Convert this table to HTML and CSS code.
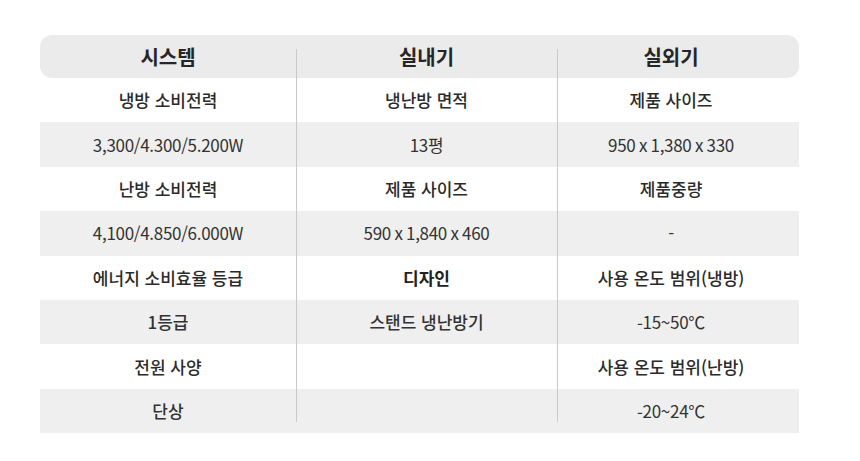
FILE: index.html
```html
<!DOCTYPE html>
<html lang="ko">
<head>
<meta charset="utf-8">
<link rel="stylesheet" href="styles.css">
</head>
<body>
<div class="spec">
  <div class="row head">
    <div class="cell">시스템</div>
    <div class="cell">실내기</div>
    <div class="cell">실외기</div>
  </div>
  <div class="row">
    <div class="cell label">냉방 소비전력</div>
    <div class="cell label">냉난방 면적</div>
    <div class="cell label">제품 사이즈</div>
  </div>
  <div class="row gray">
    <div class="cell value">3,300/4.300/5.200W</div>
    <div class="cell value">13평</div>
    <div class="cell value">950 x 1,380 x 330</div>
  </div>
  <div class="row">
    <div class="cell label">난방 소비전력</div>
    <div class="cell label">제품 사이즈</div>
    <div class="cell label">제품중량</div>
  </div>
  <div class="row gray">
    <div class="cell value">4,100/4.850/6.000W</div>
    <div class="cell value">590 x 1,840 x 460</div>
    <div class="cell value">-</div>
  </div>
  <div class="row">
    <div class="cell label">에너지 소비효율 등급</div>
    <div class="cell label strong">디자인</div>
    <div class="cell label">사용 온도 범위(냉방)</div>
  </div>
  <div class="row gray">
    <div class="cell value ko">1등급</div>
    <div class="cell value ko">스탠드 냉난방기</div>
    <div class="cell value">-15~50℃</div>
  </div>
  <div class="row">
    <div class="cell label">전원 사양</div>
    <div class="cell label"></div>
    <div class="cell label">사용 온도 범위(난방)</div>
  </div>
  <div class="row gray">
    <div class="cell value ko">단상</div>
    <div class="cell value"></div>
    <div class="cell value">-20~24℃</div>
  </div>
  <span class="divider d1"></span>
  <span class="divider d2"></span>
</div>
</body>
</html>
```

FILE: styles.css
```css
html, body {
  margin: 0;
  padding: 0;
  background: #ffffff;
}

body {
  font-family: "Noto Sans CJK KR", "Noto Sans", sans-serif;
  color: #2e2e2e;
}

.spec {
  position: relative;
  width: 759px;
  margin: 35px 0 0 40px;
}

.row {
  display: grid;
  grid-template-columns: 256px 261px 242px;
  height: 44.4px;
  align-items: center;
}

.row .cell:nth-child(3) {
  padding-right: 14px;
}

.cell {
  text-align: center;
  font-size: 17px;
  line-height: 22px;
  white-space: nowrap;
}

.head {
  height: 43px;
  background: #ebebeb;
  border-radius: 12px;
}

.head .cell {
  font-size: 20px;
  font-weight: 700;
  color: #262626;
}

.gray {
  background: #efefef;
}

.label {
  font-weight: 500;
  color: #2b2b2b;
}

.label.strong {
  font-weight: 700;
  color: #222222;
}

.value {
  font-weight: 400;
  color: #333333;
  letter-spacing: -0.3px;
  word-spacing: -1px;
}

.value.ko {
  font-weight: 500;
  letter-spacing: 0;
  word-spacing: 0;
}

.divider {
  position: absolute;
  top: 14px;
  bottom: 11px;
  width: 1px;
  background: #c9c9c9;
}

.d1 { left: 256px; }
.d2 { left: 517px; }
```
